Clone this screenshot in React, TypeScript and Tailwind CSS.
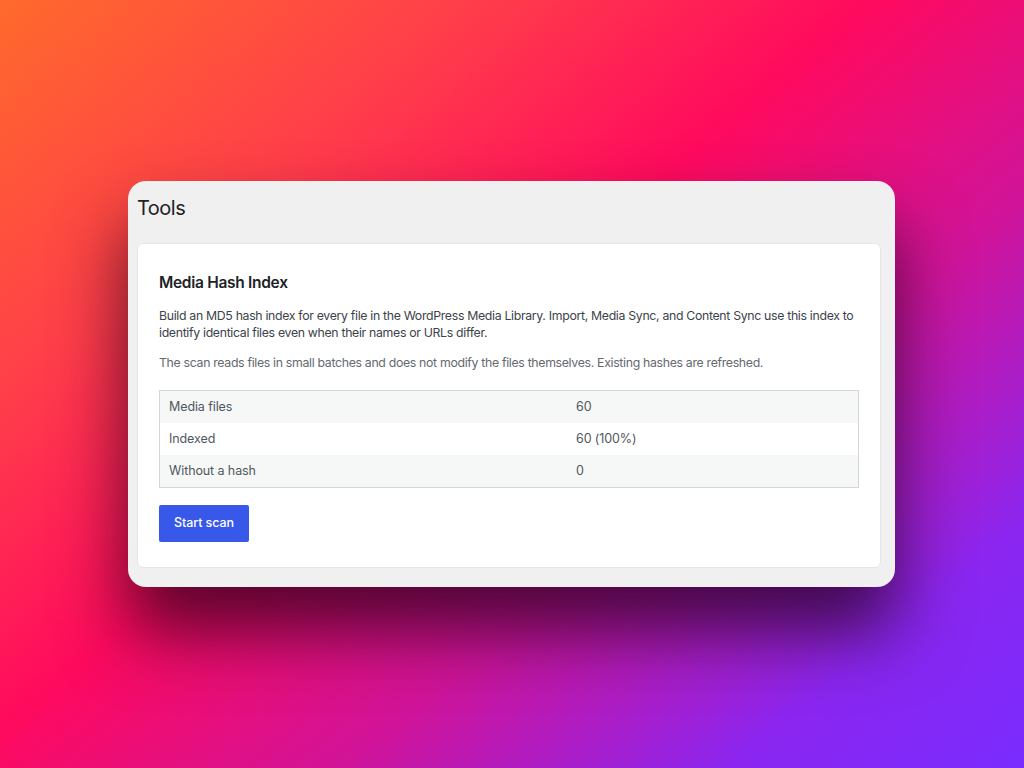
import React from "react";

const rows = [
  { label: "Media files", value: "60" },
  { label: "Indexed", value: "60 (100%)" },
  { label: "Without a hash", value: "0" },
];

export default function App() {
  return (
    <div
      className="w-[1024px] h-[768px] overflow-hidden flex flex-col bg-[linear-gradient(140deg,#ff6a2c_0%,#ff3d4a_25%,#ff0a5e_45%,#d0149a_65%,#8b26f0_85%,#7a2cff_100%)]"
      style={{ fontFamily: "Inter, 'Noto Sans', sans-serif" }}
    >
      <div className="ml-[128px] mt-[181px] w-[767px] h-[406px] rounded-[18px] bg-[#f0f0f0] shadow-[0_45px_70px_rgba(20,0,20,0.7)] pl-[9px] pr-[14px] flex flex-col">
        <h1 className="text-[20px] leading-[24px] mt-[15px] text-[#1d2327] font-normal tracking-[-0.5px]">
          Tools
        </h1>
        <div className="mt-[23px] h-[325px] bg-white rounded-[6px] border border-[#e6e6e6] px-[21px] pt-[27px]">
          <h2 className="text-[15.5px] leading-[24px] font-semibold text-[#1d2327] tracking-[-0.3px]">
            Media Hash Index
          </h2>
          <p className="mt-[12px] text-[12.3px] leading-[17px] text-[#3c434a] tracking-[-0.32px]">
            Build an MD5 hash index for every file in the WordPress Media Library. Import, Media Sync, and Content Sync use this index to identify identical files even when their names or URLs differ.
          </p>
          <p className="mt-[13px] text-[12.3px] leading-[17px] text-[#646970] tracking-[-0.32px]">
            The scan reads files in small batches and does not modify the files themselves. Existing hashes are refreshed.
          </p>
          <div className="mt-[19px] border border-[#d5d6d8] text-[12.5px] text-[#50575e] tracking-[-0.1px]">
            {rows.map((r, i) => (
              <div
                key={r.label}
                className={
                  "h-[32px] flex items-center " +
                  (i % 2 === 0 ? "bg-[#f6f7f7]" : "bg-white")
                }
              >
                <div className="w-[416px] pl-[9px]">{r.label}</div>
                <div>{r.value}</div>
              </div>
            ))}
          </div>
          <button className="mt-[17px] h-[37px] px-[15px] rounded-[2px] bg-[#3858e9] text-white text-[12.5px] font-medium tracking-[-0.1px]">
            Start scan
          </button>
        </div>
      </div>
    </div>
  );
}
